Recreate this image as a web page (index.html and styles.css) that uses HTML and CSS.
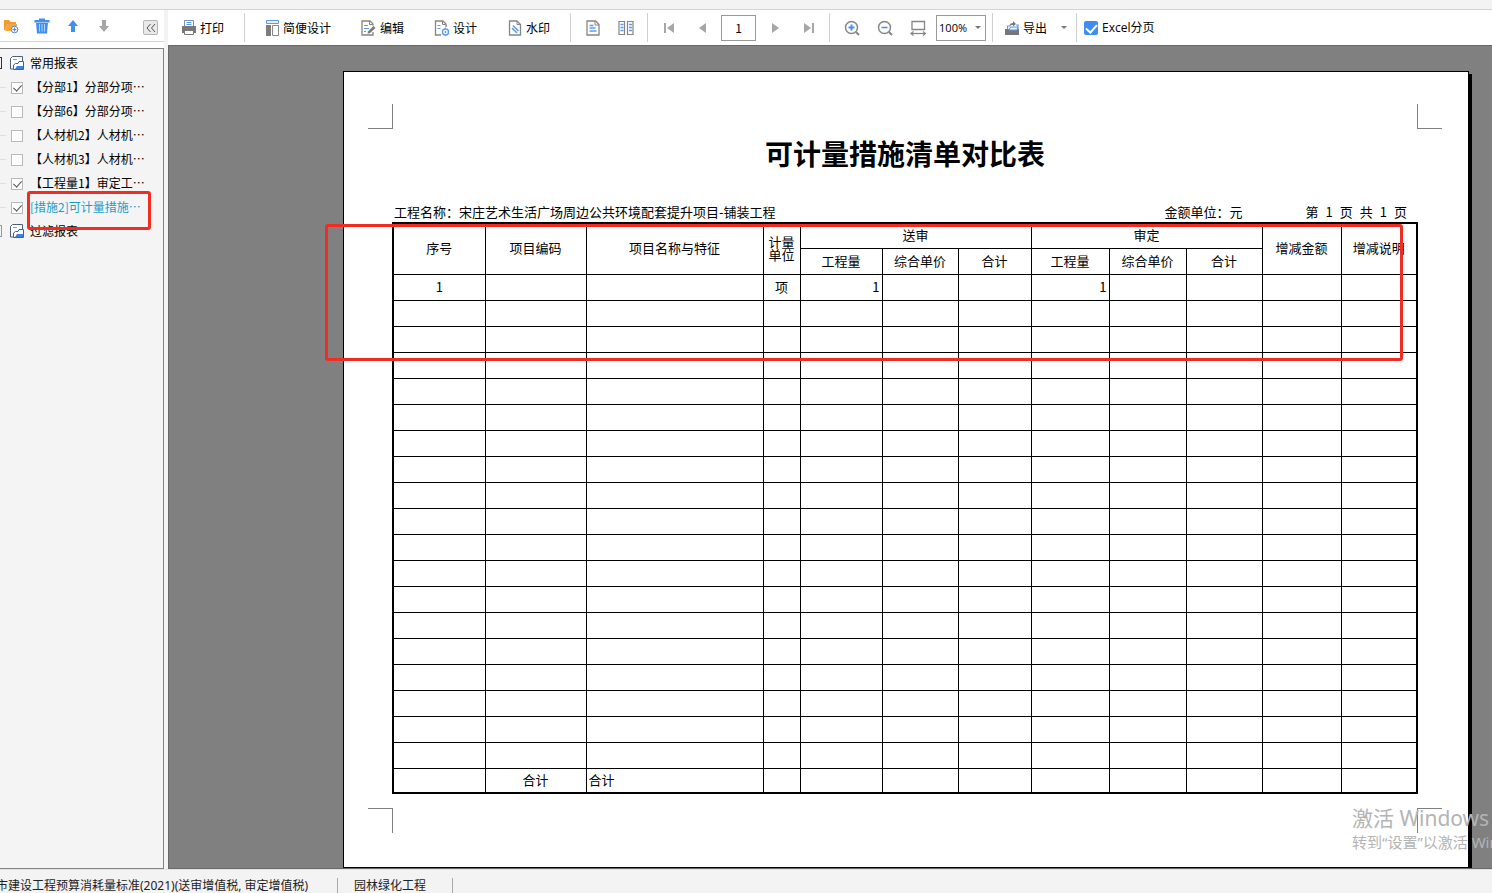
FILE: index.html
```html
<!DOCTYPE html>
<html lang="zh-CN">
<head>
<meta charset="utf-8">
<title>可计量措施清单对比表</title>
<link rel="stylesheet" href="styles.css">
</head>
<body>
<div class="app">
  <div class="top-strip"></div>
  <div class="workspace">
    <aside class="sidebar">
      <div class="side-tools">
        <button class="icon-btn" aria-label="新建文件夹"><svg width="16" height="16" viewBox="0 0 16 16"><path d="M1 2h5l1.500 2H13v2H4.500L2.500 12 1 12z" fill="#f59a2c"/><path d="M4.500 6H14v2a4 4 0 0 0-4.500 5H2.200z" fill="#f9a63c"/><circle cx="11.500" cy="11.500" r="3.300" fill="#fff" stroke="#4a86d8"/><path d="M11.500 9.500v4M9.500 11.500h4" stroke="#4a86d8" stroke-width="1.200"/></svg></button>
        <button class="icon-btn" aria-label="删除"><svg width="16" height="16" viewBox="0 0 16 16"><path d="M5 2V.5h6V2h4.500v2.500H.5V2z" fill="#3f8ef0"/><path d="M2 5h12l-1 10.500H3z" fill="#3f8ef0"/><path d="M5.500 6v7.500M8 6v7.500M10.500 6v7.500" stroke="#cfe2fb" stroke-width=".8"/></svg></button>
        <button class="icon-btn" aria-label="上移"><svg width="16" height="16" viewBox="0 0 16 16"><path d="M8 2l5 6H10v6H6V8H3z" fill="#3f8ef0"/></svg></button>
        <button class="icon-btn" aria-label="下移"><svg width="16" height="16" viewBox="0 0 16 16"><path d="M8 14l5-6H10V2H6v6H3z" fill="#a6a6a6"/></svg></button>
        <button class="collapse" aria-label="收起"><svg width="12" height="12" viewBox="0 0 12 12"><path d="M5.500 2L2 6l3.500 4M10 2L6.500 6l3.500 4" fill="none" stroke="#555"/></svg></button>
      </div>
      <div class="tree">
        <div class="node"><span class="expander dark"></span><svg class="folder" width="14" height="14" viewBox="0 0 14 14"><path d="M12.500 5V.5H2.500L.5 2.500v10.500H4" fill="#fff" stroke="#4c5f7d"/><path d="M3 3.500h4" stroke="#6da0e8"/><path d="M3.500 13.500V9L5.500 7.500H8L9 5.500h4.500v8z" fill="#fff" stroke="#4c5f7d"/><path d="M5 13l2-3h6v3z" fill="#3f82dc"/></svg><span>常用报表</span></div>
        <label class="node"><span class="branch"></span><input type="checkbox" class="tick" checked><span>【分部1】分部分项…</span></label>
        <label class="node"><span class="branch"></span><input type="checkbox" class="tick"><span>【分部6】分部分项…</span></label>
        <label class="node"><span class="branch"></span><input type="checkbox" class="tick"><span>【人材机2】人材机…</span></label>
        <label class="node"><span class="branch"></span><input type="checkbox" class="tick"><span>【人材机3】人材机…</span></label>
        <label class="node"><span class="branch"></span><input type="checkbox" class="tick" checked><span>【工程量1】审定工…</span></label>
        <label class="node active"><span class="branch"></span><input type="checkbox" class="tick" checked><span>[措施2]可计量措施…</span></label>
        <div class="node"><span class="expander"></span><svg class="folder" width="14" height="14" viewBox="0 0 14 14"><path d="M12.500 5V.5H2.500L.5 2.500v10.500H4" fill="#fff" stroke="#4c5f7d"/><path d="M3 3.500h4" stroke="#6da0e8"/><path d="M3.500 13.500V9L5.500 7.500H8L9 5.500h4.500v8z" fill="#fff" stroke="#4c5f7d"/><path d="M5 13l2-3h6v3z" fill="#3f82dc"/></svg><span>过滤报表</span></div>
        <div class="mark mark-tree"></div>
      </div>
    </aside>
    <main class="main">
      <div class="toolbar">
        <div class="group g-print">
          <button class="tool"><svg width="16" height="16" viewBox="0 0 16 16"><path d="M3.500 6V.5h9V6" fill="#fff" stroke="#6f8fbd"/><path d="M5.500 2.500h5M5.500 4.500h5" stroke="#5a9bf0"/><path d="M1 6h14v7H1z" fill="#777"/><path d="M3.500 10.500h9v4h-9z" fill="#fff" stroke="#777"/></svg>打印</button>
        </div>
        <div class="group g-design">
          <button class="tool"><svg width="16" height="16" viewBox="0 0 16 16"><path d="M2.500.5h12v3h-12z" fill="#e8f2ff" stroke="#5a9bf0"/><path d="M2 5h5v11H2z" fill="#7d7d7d"/><path d="M8.500 5.500h6v10h-6z" fill="#fff" stroke="#8a8a8a"/></svg>简便设计</button>
          <button class="tool"><svg width="16" height="16" viewBox="0 0 16 16"><path d="M12 5.500V4L9 1H1v14h11v-3" fill="#fff" stroke="#858585" stroke-width="1.300"/><path d="M8.500 1v3.500H12" fill="none" stroke="#858585"/><path d="M3 5.500h4M3 8.500h5M3 11.500h2" stroke="#5a9bf0"/><path d="M7 11.500L12.500 6l2 2L9 13l-2.500.8z" fill="#777"/></svg>编辑</button>
          <button class="tool"><svg width="16" height="16" viewBox="0 0 16 16"><path d="M12 7V4L9 1H1.500v14H7" fill="#fff" stroke="#858585" stroke-width="1.300"/><path d="M8.500 1v3.500H12" fill="none" stroke="#858585"/><path d="M3.500 5.500h3M3.500 8.500h3" stroke="#5a9bf0"/><circle cx="11.500" cy="12" r="3" fill="#fff" stroke="#5a9bf0" stroke-width="1.300"/><circle cx="11.500" cy="12" r="1" fill="#5a9bf0"/><path d="M11.500 7.500v1.500M11.500 15v1M7.800 10l1 .5M14.200 13.500l1 .5M7.800 14l1-.5M14.200 10.500l1-.5" stroke="#5a9bf0"/></svg>设计</button>
          <button class="tool"><svg width="16" height="16" viewBox="0 0 16 16"><path d="M2.500 1H10l3.500 3.500V15h-11z" fill="#fff" stroke="#858585" stroke-width="1.300"/><path d="M10 1v3.500h3.500" fill="none" stroke="#858585"/><path d="M5 8l5 5M6 5.500l5.500 5.500" stroke="#5a9bf0" stroke-width="1.600"/></svg>水印</button>
        </div>
        <div class="group g-view">
          <button class="square" aria-label="单页"><svg width="16" height="16" viewBox="0 0 16 16"><path d="M2 1h8.500L14 4.500V15H2z" fill="#fff" stroke="#858585" stroke-width="1.300"/><path d="M10 1v4h4" fill="none" stroke="#858585"/><path d="M4.500 5.500h4M4.500 8h6M4.500 11h7" stroke="#5a9bf0" stroke-width="1.300"/></svg></button>
          <button class="square" aria-label="双页"><svg width="16" height="16" viewBox="0 0 16 16"><path d="M1 1.500h5.500v13H1zM9.500 1.500H15v13H9.500z" fill="#fff" stroke="#858585" stroke-width="1.200"/><path d="M2.500 4.500h3M2.500 7.500h3M2.500 10.500h3M11 4.500h3M11 7.500h3M11 10.500h3" stroke="#5a9bf0" stroke-width="1.300"/></svg></button>
        </div>
        <div class="group g-pages">
          <button class="square" aria-label="首页"><svg width="16" height="16" viewBox="0 0 16 16"><path d="M3 3h2v10H3zM13 3v10L6 8z" fill="#a6a6a6"/></svg></button>
          <button class="square" aria-label="上一页"><svg width="16" height="16" viewBox="0 0 16 16"><path d="M12 3v10L5 8z" fill="#a6a6a6"/></svg></button>
          <input class="page-no" type="text" value="1" aria-label="页码">
          <button class="square" aria-label="下一页"><svg width="16" height="16" viewBox="0 0 16 16"><path d="M4 3v10l7-5z" fill="#a6a6a6"/></svg></button>
          <button class="square" aria-label="末页"><svg width="16" height="16" viewBox="0 0 16 16"><path d="M11 3h2v10h-2zM3 3v10l7-5z" fill="#a6a6a6"/></svg></button>
        </div>
        <div class="group g-zoom">
          <button class="square" aria-label="放大"><svg width="16" height="16" viewBox="0 0 16 16"><circle cx="7.500" cy="7.500" r="6" fill="#fff" stroke="#858585" stroke-width="1.500"/><path d="M12 12l3 3" stroke="#858585" stroke-width="2"/><path d="M7.500 4.500v6M4.500 7.500h6" stroke="#4a90f0" stroke-width="2"/></svg></button>
          <button class="square" aria-label="缩小"><svg width="16" height="16" viewBox="0 0 16 16"><circle cx="7.500" cy="7.500" r="6" fill="#fff" stroke="#858585" stroke-width="1.500"/><path d="M12 12l3 3" stroke="#858585" stroke-width="2"/><path d="M4.500 7.500h6" stroke="#4a90f0" stroke-width="1.600"/></svg></button>
          <button class="square" aria-label="适合宽度"><svg width="16" height="16" viewBox="0 0 16 16"><path d="M2 1.500h12.500v8H2z" fill="#fff" stroke="#858585" stroke-width="1.300"/><path d="M1 13.500h14.500" stroke="#858585" stroke-width="1.200"/><path d="M3.500 11.500l-2.500 2 2.500 2M13 11.500l2.500 2-2.500 2" fill="none" stroke="#858585" stroke-width="1.200"/></svg></button>
          <span class="zoom-box"><select class="zoom" aria-label="缩放比例"><option>100%</option></select><i class="caret"></i></span>
        </div>
        <div class="group g-export">
          <button class="tool"><svg width="16" height="16" viewBox="0 0 16 16"><path d="M1 9h14v6H1z" fill="#777"/><path d="M3.500 9V6h3M12 5h2v4" fill="none" stroke="#5a9bf0" stroke-width="1.200"/><path d="M5 10l1.500-3H14l-1 3z" fill="#e8f2ff" stroke="#5a9bf0"/><path d="M5.500 6c0-2 1.500-3 3.500-3V1l3 3-3 2.500V5C7.500 5 6.500 5 5.500 6z" fill="#777"/></svg>导出</button>
          <button class="drop" aria-label="导出选项"><i class="caret"></i></button>
        </div>
        <label class="excel"><input type="checkbox" class="blue" checked>Excel分页</label>
      </div>
      <div class="viewer">
        <div class="sheet">
          <i class="crop tl"></i><i class="crop tr"></i><i class="crop bl"></i><i class="crop br"></i>
          <h1 class="title">可计量措施清单对比表</h1>
          <div class="meta">
            <span class="project">工程名称：宋庄艺术生活广场周边公共环境配套提升项目-铺装工程</span>
            <span>金额单位：元</span>
            <span class="pager"><span>第</span><span>1</span><span>页</span><span>共</span><span>1</span><span>页</span></span>
          </div>
          <table class="report">
            <colgroup><col class="c-no"><col class="c-code"><col class="c-name"><col class="c-unit"><col class="c-qty"><col class="c-price"><col class="c-sum"><col class="c-qty2"><col class="c-price2"><col class="c-sum2"><col class="c-diff"><col class="c-note"></colgroup>
            <thead>
              <tr class="edge"><th rowspan="2">序号</th><th rowspan="2">项目编码</th><th rowspan="2">项目名称与特征</th><th rowspan="2">计量单位</th><th colspan="3">送审</th><th colspan="3">审定</th><th rowspan="2">增减金额</th><th rowspan="2">增减说明</th></tr>
              <tr><th>工程量</th><th>综合单价</th><th>合计</th><th>工程量</th><th>综合单价</th><th>合计</th></tr>
            </thead>
            <tbody>
              <tr><td class="mid">1</td><td></td><td></td><td class="mid">项</td><td class="num">1</td><td></td><td></td><td class="num">1</td><td></td><td></td><td></td><td></td></tr>
              <tr><td></td><td></td><td></td><td></td><td></td><td></td><td></td><td></td><td></td><td></td><td></td><td></td></tr>
              <tr><td></td><td></td><td></td><td></td><td></td><td></td><td></td><td></td><td></td><td></td><td></td><td></td></tr>
              <tr><td></td><td></td><td></td><td></td><td></td><td></td><td></td><td></td><td></td><td></td><td></td><td></td></tr>
              <tr><td></td><td></td><td></td><td></td><td></td><td></td><td></td><td></td><td></td><td></td><td></td><td></td></tr>
              <tr><td></td><td></td><td></td><td></td><td></td><td></td><td></td><td></td><td></td><td></td><td></td><td></td></tr>
              <tr><td></td><td></td><td></td><td></td><td></td><td></td><td></td><td></td><td></td><td></td><td></td><td></td></tr>
              <tr><td></td><td></td><td></td><td></td><td></td><td></td><td></td><td></td><td></td><td></td><td></td><td></td></tr>
              <tr><td></td><td></td><td></td><td></td><td></td><td></td><td></td><td></td><td></td><td></td><td></td><td></td></tr>
              <tr><td></td><td></td><td></td><td></td><td></td><td></td><td></td><td></td><td></td><td></td><td></td><td></td></tr>
              <tr><td></td><td></td><td></td><td></td><td></td><td></td><td></td><td></td><td></td><td></td><td></td><td></td></tr>
              <tr><td></td><td></td><td></td><td></td><td></td><td></td><td></td><td></td><td></td><td></td><td></td><td></td></tr>
              <tr><td></td><td></td><td></td><td></td><td></td><td></td><td></td><td></td><td></td><td></td><td></td><td></td></tr>
              <tr><td></td><td></td><td></td><td></td><td></td><td></td><td></td><td></td><td></td><td></td><td></td><td></td></tr>
              <tr><td></td><td></td><td></td><td></td><td></td><td></td><td></td><td></td><td></td><td></td><td></td><td></td></tr>
              <tr><td></td><td></td><td></td><td></td><td></td><td></td><td></td><td></td><td></td><td></td><td></td><td></td></tr>
              <tr><td></td><td></td><td></td><td></td><td></td><td></td><td></td><td></td><td></td><td></td><td></td><td></td></tr>
              <tr><td></td><td></td><td></td><td></td><td></td><td></td><td></td><td></td><td></td><td></td><td></td><td></td></tr>
              <tr><td></td><td></td><td></td><td></td><td></td><td></td><td></td><td></td><td></td><td></td><td></td><td></td></tr>
            </tbody>
            <tfoot>
              <tr class="edge"><td></td><td class="mid">合计</td><td>合计</td><td></td><td></td><td></td><td></td><td></td><td></td><td></td><td></td><td></td></tr>
            </tfoot>
          </table>
          <div class="mark mark-table"></div>
        </div>
      </div>
    </main>
  </div>
  <footer class="status"><span class="standard">市建设工程预算消耗量标准(2021)(送审增值税, 审定增值税)</span><span class="discipline">园林绿化工程</span></footer>
  <div class="activation"><div class="act-head">激活 Windows</div><div class="act-sub">转到“设置”以激活 Windows。</div></div>
</div>
</body>
</html>
```
FILE: styles.css
```css
* { box-sizing: border-box; }
body {
  margin: 0;
  background: #f3f3f3;
  color: #000;
  font: 12px/16px "Noto Sans CJK SC", sans-serif;
}
button, input, select { font: inherit; color: inherit; }
button { padding: 0; border: 0; background: none; }
svg { display: block; flex: none; }

.app {
  position: relative;
  display: flex;
  flex-direction: column;
  height: 100vh;
  overflow: hidden;
}
.top-strip { flex: none; height: 10px; border-bottom: 1px solid #d4d4d4; }
.workspace { flex: 1; display: flex; min-height: 0; }

/* sidebar */
.sidebar {
  flex: none;
  width: 168px;
  display: flex;
  flex-direction: column;
  padding-right: 4px;
  background: linear-gradient(to right, #fff 164px, #f3f3f3 164px);
}
.side-tools {
  display: flex;
  align-items: center;
  gap: 15px;
  height: 32px;
  padding: 0 6px 0 3px;
  border-bottom: 1px solid #d4d4d4;
}
.collapse {
  display: flex;
  align-items: center;
  justify-content: center;
  width: 15px;
  height: 15px;
  margin: 4px 0 0 auto;
  border: 1px solid #b5b5b5;
  border-radius: 2px;
  background: #e9e9e9;
}
.tree {
  position: relative;
  flex: 1;
  margin-top: 6px;
  padding-top: 2px;
  border: 1px solid #828282;
  border-left: 0;
  background: #f4f4f4;
}
.node {
  display: flex;
  align-items: center;
  height: 24px;
  white-space: nowrap;
}
.expander { width: 2px; height: 12px; margin-right: 8px; border: 1px solid #999; border-left: 0; }
.expander.dark { border-color: #333; }
.folder { margin-right: 6px; }
.branch { width: 6px; margin-right: 5px; border-top: 1px solid #f3d9c0; }
.tick {
  appearance: none;
  display: flex;
  justify-content: center;
  width: 12px;
  height: 12px;
  margin: 2px 7px 0 0;
  border: 1px solid #b9b9b9;
  background: #fff;
}
.tick:checked::before {
  content: "";
  width: 4px;
  height: 7px;
  border: solid #555;
  border-width: 0 1px 1px 0;
  transform: rotate(42deg);
}
.active { color: #16a0cd; }
.mark { position: absolute; border: 3px solid #f02d22; border-radius: 3px; }
.mark-tree { left: 27px; top: 142px; width: 124px; height: 39px; }

/* toolbar */
.main { flex: 1; min-width: 0; display: flex; flex-direction: column; }
.toolbar { display: flex; align-items: center; height: 35px; background: #fff; white-space: nowrap; }
.group { display: flex; align-items: center; height: 29px; border-right: 1px solid #cfcfcf; }
.tool { display: flex; align-items: center; gap: 3px; }
.square { display: flex; align-items: center; justify-content: center; width: 33px; height: 26px; }
.g-print { padding: 0 20px 0 13px; }
.g-design { padding: 0 20px 0 19px; gap: 30px; }
.g-view { padding: 0 5px; }
.g-pages { padding: 0 4px; }
.g-zoom { padding: 0 6px 0 5px; }
.g-export { padding: 0 8px 0 11px; gap: 13px; }
.page-no {
  width: 35px;
  height: 26px;
  margin: 0 3px;
  padding: 0;
  border: 1px solid #999;
  background: #fff;
  text-align: center;
}
.zoom-box { position: relative; display: flex; margin-left: 2px; }
.zoom {
  appearance: none;
  width: 50px;
  height: 26px;
  padding: 0 2px;
  border: 1px solid #999;
  border-radius: 0;
  background: #fff;
  font: 11px "Open Sans", sans-serif;
}
.zoom-box .caret { position: absolute; right: 5px; top: 11px; }
.caret { display: block; border: solid transparent; border-width: 3px 3px 0; border-top-color: #777; }
.drop { padding: 0 1px; }
.excel { display: flex; align-items: center; gap: 4px; padding-left: 7px; font-family: "Open Sans", "Noto Sans CJK SC", sans-serif; }
.blue {
  appearance: none;
  display: flex;
  justify-content: center;
  width: 14px;
  height: 14px;
  margin: 0;
  border-radius: 2px;
  background: #3e8ef2;
}
.blue:checked::before {
  content: "";
  width: 5px;
  height: 9px;
  margin-top: 1px;
  border: solid #fff;
  border-width: 0 2px 2px 0;
  transform: rotate(42deg);
}

/* report */
.viewer {
  flex: 1;
  display: flex;
  min-height: 0;
  padding: 25px 23px 0 174px;
  border: solid #696969;
  border-width: 1px 0 1px 1px;
  background: #808080;
  overflow: hidden;
}
.sheet {
  position: relative;
  flex: 1;
  min-width: 0;
  padding: 63px 50px 0 48px;
  border: 1px solid #000;
  background: #fff;
  box-shadow: 3px 3px 0 #000;
}
.title { margin: 0; font-size: 28px; line-height: 36px; text-align: center; }
.meta {
  display: flex;
  gap: 63px;
  margin-top: 31px;
  padding: 0 11px 0 2px;
  font-size: 13px;
  line-height: 20px;
  white-space: nowrap;
}
.project { flex: 1; }
.pager { display: flex; gap: 7px; }
.report {
  width: 100%;
  table-layout: fixed;
  border-collapse: collapse;
  border: 2px solid #000;
  font-size: 13px;
  line-height: 13px;
}
.report th, .report td { height: 26px; padding: 0 2px 2px; border: 1px solid #000; font-weight: normal; text-align: left; }
.report th, .report .mid { text-align: center; }
.report .num { text-align: right; }
.report .edge > * { height: 25px; }
.c-no { width: 92px; }
.c-code { width: 101px; }
.c-name { width: 177px; }
.c-unit { width: 37px; }
.c-qty { width: 82px; }
.c-price { width: 76px; }
.c-sum { width: 73px; }
.c-qty2 { width: 78px; }
.c-price2 { width: 77px; }
.c-sum2 { width: 76px; }
.c-diff { width: 79px; }
.c-note { width: 76px; }
.mark-table { left: -19px; right: 65px; top: 152px; height: 137px; }
.crop { position: absolute; width: 25px; height: 25px; border: 0 solid #808080; }
.tl { left: 24px; top: 32px; border-width: 0 1px 1px 0; }
.tr { right: 26px; top: 32px; border-width: 0 0 1px 1px; }
.bl { left: 24px; bottom: 34px; border-width: 1px 1px 0 0; }
.br { right: 26px; bottom: 34px; border-width: 1px 0 0 1px; }

/* status bar */
.status {
  flex: none;
  display: flex;
  align-items: center;
  height: 24px;
  padding-top: 8px;
  border-top: 1px solid #e2e2e2;
  color: #222;
  font-family: "Noto Sans", "Noto Sans CJK SC", sans-serif;
  white-space: nowrap;
}
.standard { width: 342px; margin-left: -4px; border-right: 1px solid #aaa; }
.discipline { width: 115px; padding-left: 16px; border-right: 1px solid #aaa; }

.activation {
  position: absolute;
  left: calc(100% - 140px);
  bottom: 40px;
  color: #b4b4b4;
  font-family: "Noto Sans", "Noto Sans CJK SC", sans-serif;
  white-space: nowrap;
}
.act-head { font-size: 21px; line-height: 26px; }
.act-sub { font-size: 15px; line-height: 22px; }
```
